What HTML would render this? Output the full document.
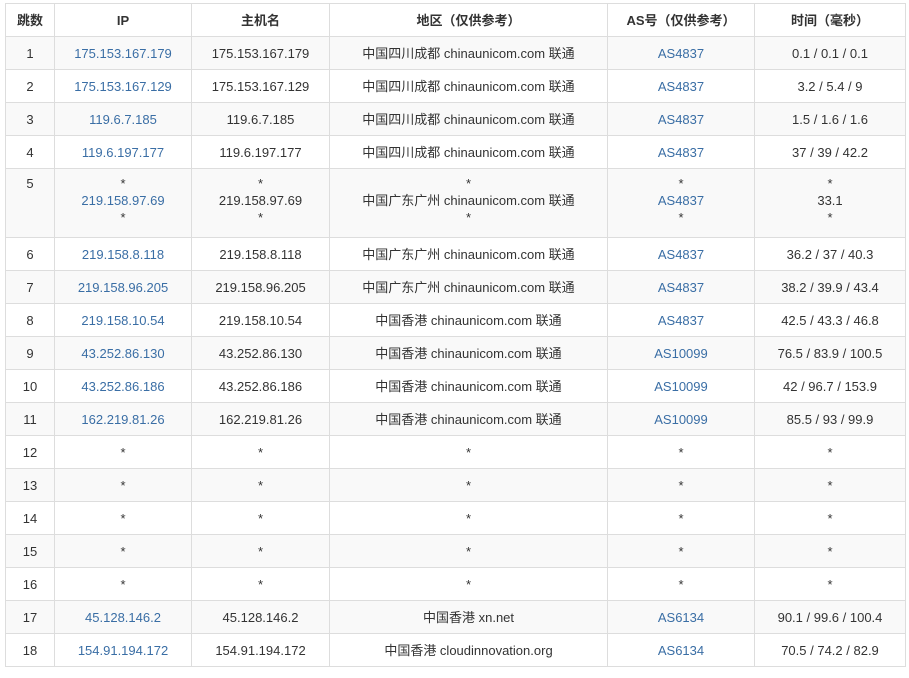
<!DOCTYPE html>
<html><head><meta charset="utf-8"><style>
body{margin:0;background:#fff;font-family:"Liberation Sans","Noto Sans CJK SC",sans-serif;font-size:13px;color:#333}
table{position:absolute;left:5px;top:3px;width:900px;border-collapse:collapse;table-layout:fixed}
td,th{border:1px solid #ddd;text-align:center;padding:0;line-height:17px}
th{font-weight:bold;height:32px}
td{height:32px}
tr.o td{background:#f9f9f9}
a{color:#3a6ea5;text-decoration:none}
td.t{vertical-align:top;padding-top:6px;height:62px}
</style></head><body>
<table>
<colgroup><col style="width:49px"><col style="width:137px"><col style="width:138px"><col style="width:278px"><col style="width:147px"><col style="width:151px"></colgroup>
<tr><th>跳数</th><th>IP</th><th>主机名</th><th>地区（仅供参考）</th><th>AS号（仅供参考）</th><th>时间（毫秒）</th></tr>
<tr class="o"><td>1</td><td><a>175.153.167.179</a></td><td>175.153.167.179</td><td>中国四川成都 chinaunicom.com 联通</td><td><a>AS4837</a></td><td>0.1 / 0.1 / 0.1</td></tr>
<tr><td>2</td><td><a>175.153.167.129</a></td><td>175.153.167.129</td><td>中国四川成都 chinaunicom.com 联通</td><td><a>AS4837</a></td><td>3.2 / 5.4 / 9</td></tr>
<tr class="o"><td>3</td><td><a>119.6.7.185</a></td><td>119.6.7.185</td><td>中国四川成都 chinaunicom.com 联通</td><td><a>AS4837</a></td><td>1.5 / 1.6 / 1.6</td></tr>
<tr><td>4</td><td><a>119.6.197.177</a></td><td>119.6.197.177</td><td>中国四川成都 chinaunicom.com 联通</td><td><a>AS4837</a></td><td>37 / 39 / 42.2</td></tr>
<tr class="o"><td class="t">5</td><td class="t">*<br><a>219.158.97.69</a><br>*</td><td class="t">*<br>219.158.97.69<br>*</td><td class="t">*<br>中国广东广州 chinaunicom.com 联通<br>*</td><td class="t">*<br><a>AS4837</a><br>*</td><td class="t">*<br>33.1<br>*</td></tr>
<tr><td>6</td><td><a>219.158.8.118</a></td><td>219.158.8.118</td><td>中国广东广州 chinaunicom.com 联通</td><td><a>AS4837</a></td><td>36.2 / 37 / 40.3</td></tr>
<tr class="o"><td>7</td><td><a>219.158.96.205</a></td><td>219.158.96.205</td><td>中国广东广州 chinaunicom.com 联通</td><td><a>AS4837</a></td><td>38.2 / 39.9 / 43.4</td></tr>
<tr><td>8</td><td><a>219.158.10.54</a></td><td>219.158.10.54</td><td>中国香港 chinaunicom.com 联通</td><td><a>AS4837</a></td><td>42.5 / 43.3 / 46.8</td></tr>
<tr class="o"><td>9</td><td><a>43.252.86.130</a></td><td>43.252.86.130</td><td>中国香港 chinaunicom.com 联通</td><td><a>AS10099</a></td><td>76.5 / 83.9 / 100.5</td></tr>
<tr><td>10</td><td><a>43.252.86.186</a></td><td>43.252.86.186</td><td>中国香港 chinaunicom.com 联通</td><td><a>AS10099</a></td><td>42 / 96.7 / 153.9</td></tr>
<tr class="o"><td>11</td><td><a>162.219.81.26</a></td><td>162.219.81.26</td><td>中国香港 chinaunicom.com 联通</td><td><a>AS10099</a></td><td>85.5 / 93 / 99.9</td></tr>
<tr><td>12</td><td>*</td><td>*</td><td>*</td><td>*</td><td>*</td></tr>
<tr class="o"><td>13</td><td>*</td><td>*</td><td>*</td><td>*</td><td>*</td></tr>
<tr><td>14</td><td>*</td><td>*</td><td>*</td><td>*</td><td>*</td></tr>
<tr class="o"><td>15</td><td>*</td><td>*</td><td>*</td><td>*</td><td>*</td></tr>
<tr><td>16</td><td>*</td><td>*</td><td>*</td><td>*</td><td>*</td></tr>
<tr class="o"><td>17</td><td><a>45.128.146.2</a></td><td>45.128.146.2</td><td>中国香港 xn.net</td><td><a>AS6134</a></td><td>90.1 / 99.6 / 100.4</td></tr>
<tr><td>18</td><td><a>154.91.194.172</a></td><td>154.91.194.172</td><td>中国香港 cloudinnovation.org</td><td><a>AS6134</a></td><td>70.5 / 74.2 / 82.9</td></tr>
</table>
</body></html>
